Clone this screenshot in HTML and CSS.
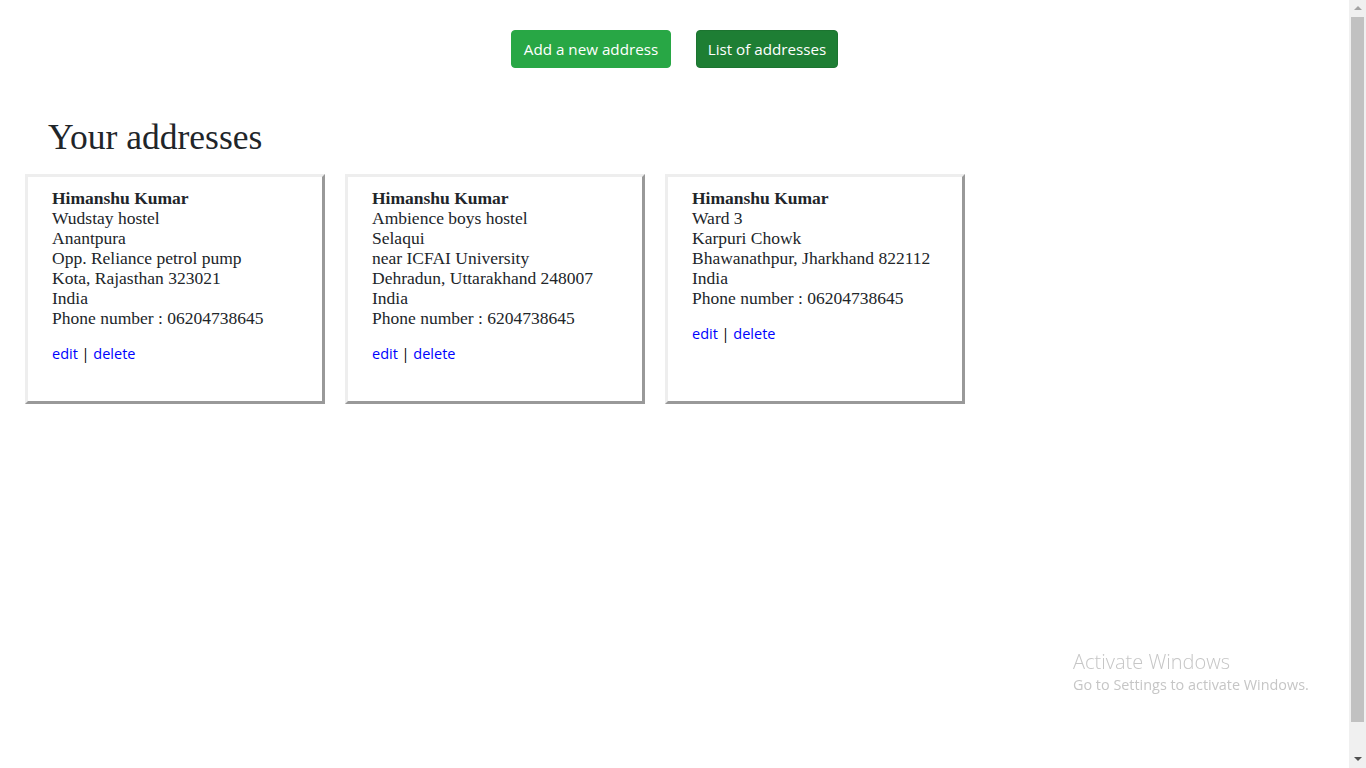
FILE: index.html
```html
<!DOCTYPE html>
<html lang="en">
<head>
<meta charset="utf-8">
<title>Your addresses</title>
<link rel="stylesheet" href="styles.css">
</head>
<body>
<div class="viewport">
  <main class="page">
    <nav class="actions">
      <a class="btn btn-add" href="#">Add a new address</a>
      <a class="btn btn-list" href="#">List of addresses</a>
    </nav>
    <h2 class="title">Your addresses</h2>
    <section class="cards">
      <article class="card">
        <div class="addr">
          <strong>Himanshu Kumar</strong><br>
          Wudstay hostel<br>
          Anantpura<br>
          Opp. Reliance petrol pump<br>
          Kota, Rajasthan 323021<br>
          India<br>
          Phone number : 06204738645
        </div>
        <div class="links"><a href="#">edit</a> | <a href="#">delete</a></div>
      </article>
      <article class="card">
        <div class="addr">
          <strong>Himanshu Kumar</strong><br>
          Ambience boys hostel<br>
          Selaqui<br>
          near ICFAI University<br>
          Dehradun, Uttarakhand 248007<br>
          India<br>
          Phone number : 6204738645
        </div>
        <div class="links"><a href="#">edit</a> | <a href="#">delete</a></div>
      </article>
      <article class="card">
        <div class="addr">
          <strong>Himanshu Kumar</strong><br>
          Ward 3<br>
          Karpuri Chowk<br>
          Bhawanathpur, Jharkhand 822112<br>
          India<br>
          Phone number : 06204738645
        </div>
        <div class="links"><a href="#">edit</a> | <a href="#">delete</a></div>
      </article>
    </section>
  </main>
  <aside class="scrollbar">
    <span class="arrow arrow-up"></span>
    <span class="thumb"></span>
    <span class="arrow arrow-down"></span>
  </aside>
</div>
<div class="watermark">
  <div class="wm-title">Activate Windows</div>
  <div class="wm-sub">Go to Settings to activate Windows.</div>
</div>
</body>
</html>
```

FILE: styles.css
```css
* { box-sizing: border-box; }
html, body { margin: 0; height: 100%; }
body {
  background: #fff;
  color: #212529;
  font-family: "Liberation Serif", serif;
  overflow: hidden;
}
.viewport {
  display: flex;
  height: 100vh;
}
.page {
  flex: 1;
}
.actions {
  display: flex;
  justify-content: center;
  gap: 25px;
  padding-top: 30px;
}
.btn {
  display: inline-block;
  font-family: "Open Sans", sans-serif;
  font-size: 15.2px;
  line-height: 24px;
  padding: 6px 0;
  border: 1px solid transparent;
  border-radius: 4px;
  color: #fff;
  text-decoration: none;
  text-align: center;
  white-space: nowrap;
}
.btn-add { background: #28a745; border-color: #28a745; width: 160px; }
.btn-list { background: #1e7e34; border-color: #1c7430; width: 142px; }
.title {
  font-family: "Liberation Serif", serif;
  font-weight: 400;
  font-size: 35.5px;
  line-height: 38px;
  margin: 50px 0 18px 48px;
}
.cards {
  display: flex;
  gap: 20px;
  padding-left: 25px;
}
.card {
  width: 300px;
  height: 230px;
  border: 3px solid;
  border-color: #eeeeee #999999 #999999 #eeeeee;
  padding: 11px 24px;
  font-size: 17.5px;
  line-height: 20px;
}
.addr strong { font-weight: 700; }
.links {
  margin-top: 16px;
  font-family: "Open Sans", sans-serif;
  font-size: 14.5px;
  line-height: 20px;
  color: #000;
}
.links a { color: #0000ff; text-decoration: none; }
.scrollbar {
  width: 17px;
  background: #f0f0f0;
  display: flex;
  flex-direction: column;
  align-items: center;
}
.arrow {
  width: 0;
  height: 0;
  border-left: 4px solid transparent;
  border-right: 4px solid transparent;
  margin: 6px 0 7px;
}
.arrow-up { border-bottom: 4px solid #a3a3a3; }
.arrow-down { border-top: 4px solid #505050; }
.thumb {
  width: 13px;
  flex: 1;
  background: #c1c1c1;
  margin-bottom: 29px;
}
.watermark {
  position: fixed;
  left: 1073px;
  top: 650px;
  color: #c6c6c6;
  font-family: "Open Sans", sans-serif;
}
.wm-title { font-size: 20px; line-height: 24px; font-weight: 300; }
.wm-sub { font-size: 14.4px; line-height: 22px; }
```
